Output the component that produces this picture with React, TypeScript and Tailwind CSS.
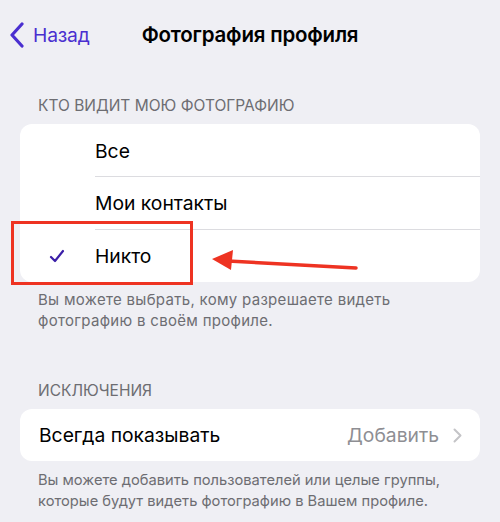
import React from "react";

export default function App() {
  return (
    <div
      className="relative w-[500px] h-[522px] overflow-hidden bg-[#efeff4]"
      style={{ fontFamily: "Inter, 'Noto Sans', sans-serif" }}
    >
      {/* Header */}
      <div className="relative h-[70px] flex items-center">
        <div className="flex items-center pl-[9px] text-[#4a2fd0]">
          <svg width="16" height="26" viewBox="0 0 16 26" className="mr-[8px]">
            <path d="M13 2 L3 13 L13 24" fill="none" stroke="#4a2fd0" strokeWidth="3.2" strokeLinecap="round" strokeLinejoin="round" />
          </svg>
          <span className="text-[19.3px] tracking-[-0.2px]">Назад</span>
        </div>
        <div className="absolute left-0 right-0 top-0 h-[70px] flex items-center justify-center pointer-events-none">
          <span className="text-[20.5px] font-semibold text-black tracking-[-0.2px]">Фотография профиля</span>
        </div>
      </div>

      {/* Section 1 */}
      <div className="pl-[38px] pt-[26px] pb-[8px] text-[15.5px] text-[#6d6d72] leading-[20px] uppercase">
        Кто видит мою фотографию
      </div>
      <div className="mx-[20px] bg-white rounded-[12px] overflow-hidden">
        <div className="h-[52px] flex items-center pl-[75px] pt-[2px] text-[19.3px] text-black">Все</div>
        <div className="h-px bg-[#dcdce0] ml-[75px]" />
        <div className="h-[52px] flex items-center pl-[75px] text-[19.3px] text-black">Мои контакты</div>
        <div className="h-px bg-[#dcdce0] ml-[75px]" />
        <div className="h-[52px] flex items-center text-[19.3px] text-black relative">
          <svg width="16" height="14" viewBox="0 0 16 14" className="absolute left-[29px] top-[19px]">
            <path d="M2 8 L6 12 L14 2" fill="none" stroke="#3b1fa8" strokeWidth="2.2" strokeLinecap="round" strokeLinejoin="round" />
          </svg>
          <span className="pl-[75px]">Никто</span>
        </div>
      </div>
      <div className="pl-[38px] pr-[20px] pt-[7px] text-[15px] leading-[21px] text-[#6d6d72] tracking-[0.3px]">
        Вы можете выбрать, кому разрешаете видеть
        <br />
        фотографию в своём профиле.
      </div>

      {/* Section 2 */}
      <div className="pl-[38px] pt-[50px] pb-[8px] text-[15.5px] text-[#6d6d72] leading-[20px] uppercase">
        Исключения
      </div>
      <div className="mx-[20px] bg-white rounded-[12px] h-[52px] flex items-center pl-[19px] pr-[18px]">
        <span className="text-[19.3px] text-black flex-1">Всегда показывать</span>
        <span className="text-[19.3px] text-[#8e8e93] mr-[14px]">Добавить</span>
        <svg width="9" height="15" viewBox="0 0 9 15">
          <path d="M1.5 1.5 L7.5 7.5 L1.5 13.5" fill="none" stroke="#c4c4c7" strokeWidth="2" strokeLinecap="round" strokeLinejoin="round" />
        </svg>
      </div>
      <div className="pl-[38px] pr-[10px] pt-[9px] text-[14.7px] leading-[21px] text-[#6d6d72]">
        Вы можете добавить пользователей или целые группы,
        <br />
        которые будут видеть фотографию в Вашем профиле.
      </div>

      {/* Annotation overlay */}
      <div className="absolute left-[11px] top-[221px] w-[182px] h-[64px] border-[3px] border-[#ee3322]" />
      <svg className="absolute left-0 top-0" width="500" height="522" viewBox="0 0 500 522">
        <line x1="228" y1="261" x2="356" y2="268" stroke="#ee3322" strokeWidth="3.5" strokeLinecap="round" />
        <polygon points="212,259 233,250 231,270" fill="#ee3322" />
      </svg>
    </div>
  );
}
